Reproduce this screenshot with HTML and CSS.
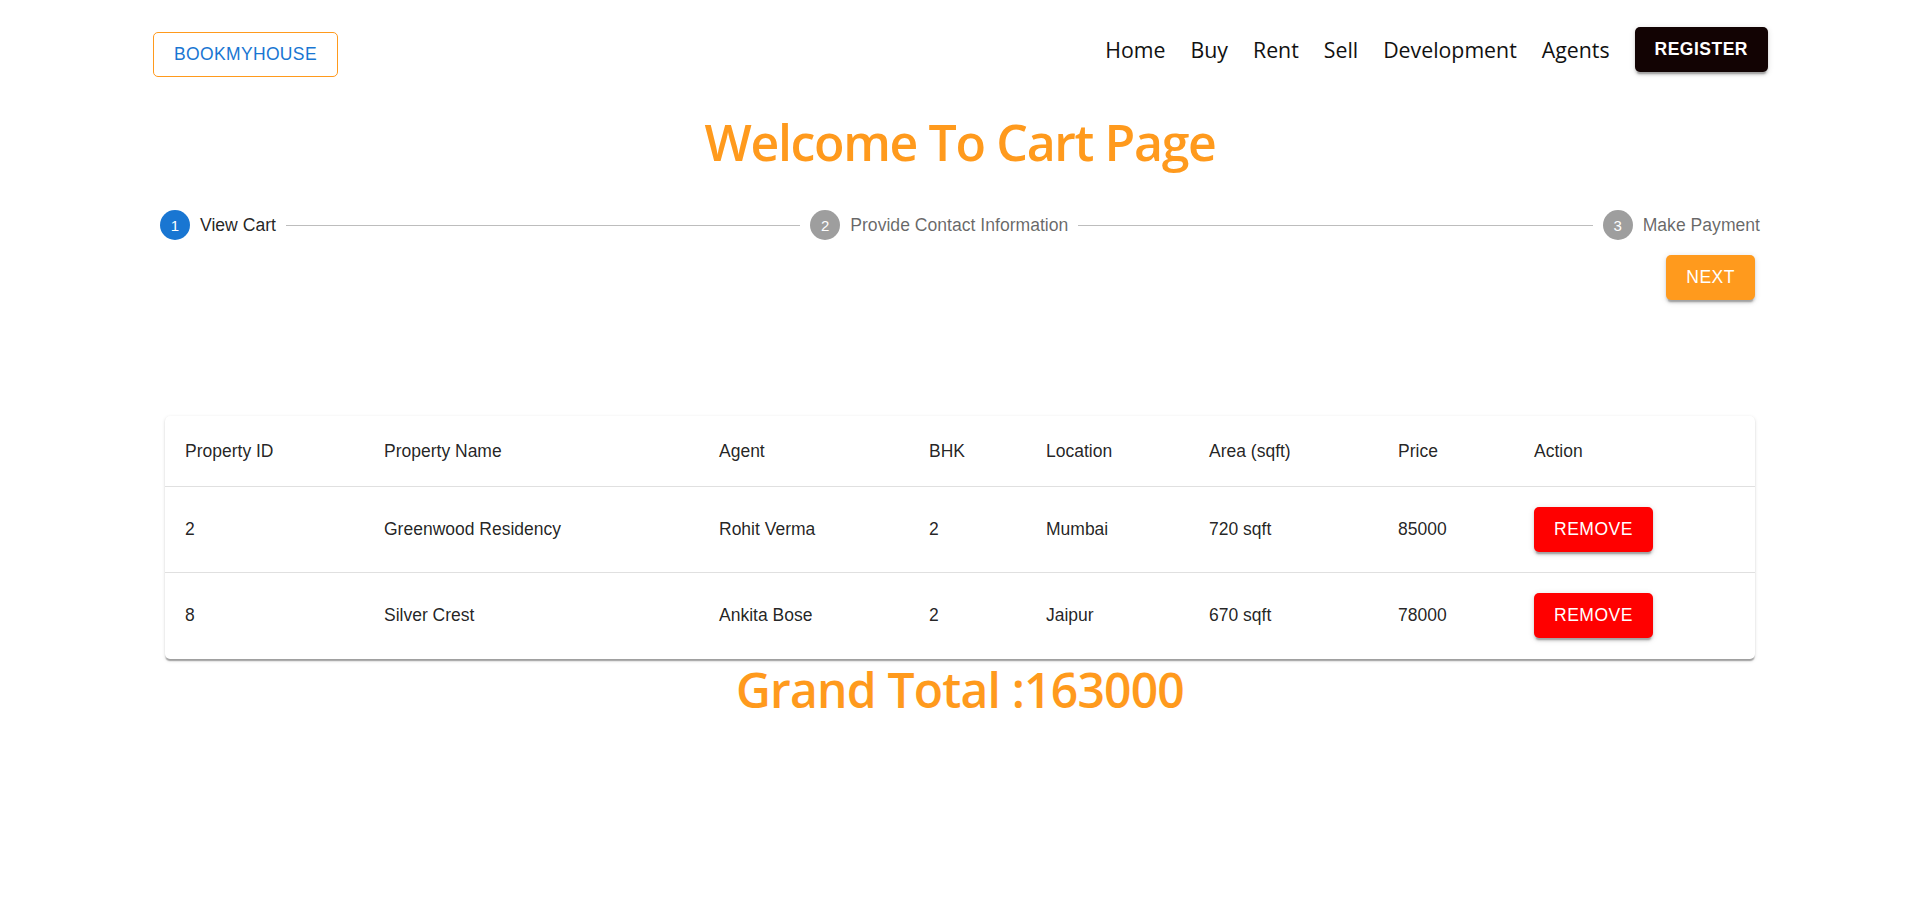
FILE: index.html
```html
<!DOCTYPE html>
<html lang="en">
<head>
<meta charset="utf-8">
<title>Cart - BookMyHouse</title>
<link rel="stylesheet" href="styles.css">
</head>
<body>
<header class="topbar">
  <a class="logo-btn" href="#">BOOKMYHOUSE</a>
  <nav class="nav">
    <a class="nav-link" href="#">Home</a>
    <a class="nav-link" href="#">Buy</a>
    <a class="nav-link" href="#">Rent</a>
    <a class="nav-link" href="#">Sell</a>
    <a class="nav-link" href="#">Development</a>
    <a class="nav-link" href="#">Agents</a>
    <button class="register-btn" type="button">REGISTER</button>
  </nav>
</header>

<h1 class="page-title">Welcome To Cart Page</h1>

<div class="stepper">
  <div class="step">
    <span class="step-icon step-icon-active">1</span>
    <span class="step-label step-label-active">View Cart</span>
  </div>
  <div class="connector"></div>
  <div class="step">
    <span class="step-icon">2</span>
    <span class="step-label">Provide Contact Information</span>
  </div>
  <div class="connector"></div>
  <div class="step">
    <span class="step-icon">3</span>
    <span class="step-label">Make Payment</span>
  </div>
</div>

<div class="step-actions">
  <button class="next-btn" type="button">NEXT</button>
</div>

<div class="table-card">
  <table class="cart-table">
    <colgroup>
      <col class="c-id"><col class="c-name"><col class="c-agent"><col class="c-bhk">
      <col class="c-loc"><col class="c-area"><col class="c-price"><col class="c-action">
    </colgroup>
    <thead>
      <tr>
        <th>Property ID</th>
        <th>Property Name</th>
        <th>Agent</th>
        <th>BHK</th>
        <th>Location</th>
        <th>Area (sqft)</th>
        <th>Price</th>
        <th>Action</th>
      </tr>
    </thead>
    <tbody>
      <tr>
        <td>2</td>
        <td>Greenwood Residency</td>
        <td>Rohit Verma</td>
        <td>2</td>
        <td>Mumbai</td>
        <td>720 sqft</td>
        <td>85000</td>
        <td><button class="remove-btn" type="button">REMOVE</button></td>
      </tr>
      <tr>
        <td>8</td>
        <td>Silver Crest</td>
        <td>Ankita Bose</td>
        <td>2</td>
        <td>Jaipur</td>
        <td>670 sqft</td>
        <td>78000</td>
        <td><button class="remove-btn" type="button">REMOVE</button></td>
      </tr>
    </tbody>
  </table>
</div>

<h1 class="grand-total">Grand Total :163000</h1>
</body>
</html>
```

FILE: styles.css
```css
* { box-sizing: border-box; }

body {
  margin: 0;
  background: #ffffff;
  font-family: "Liberation Sans", Arial, sans-serif;
  color: rgba(0, 0, 0, 0.87);
}

/* ---------- header ---------- */
.topbar {
  display: flex;
  justify-content: space-between;
  align-items: flex-start;
  padding: 27px 152px 0 153px;
}

.logo-btn {
  margin-top: 5px;
  height: 45px;
  display: inline-flex;
  align-items: center;
  padding: 0 20px;
  border: 1px solid #ff9a1d;
  border-radius: 5px;
  color: #1976d2;
  font-size: 17.5px;
  letter-spacing: 0.35px;
  text-decoration: none;
  text-transform: uppercase;
}

.nav {
  display: flex;
  align-items: center;
  gap: 25px;
  height: 45px;
}

.nav-link {
  font-family: "Open Sans", "Noto Sans", sans-serif;
  font-size: 21.3px;
  color: #111111;
  text-decoration: none;
}

.register-btn {
  height: 45px;
  padding: 0 20px;
  border: none;
  border-radius: 5px;
  background: #120303;
  color: #ffffff;
  font-family: "Liberation Sans", Arial, sans-serif;
  font-size: 17.5px;
  font-weight: 700;
  letter-spacing: 0.5px;
  box-shadow: 0 3.75px 1.25px -2.5px rgba(0,0,0,0.2), 0 2.5px 2.5px 0 rgba(0,0,0,0.14), 0 1.25px 6.25px 0 rgba(0,0,0,0.12);
}

/* ---------- titles ---------- */
.page-title,
.grand-total {
  margin: 0;
  text-align: center;
  font-family: "Open Sans", "Noto Sans", sans-serif;
  font-weight: 600;
  color: #ff9a1d;
}

.page-title {
  margin-top: 35px;
  font-size: 50px;
  line-height: 60px;
  letter-spacing: -1.35px;
}

.grand-total {
  font-size: 48px;
  line-height: 62px;
  letter-spacing: -0.8px;
}

/* ---------- stepper ---------- */
.stepper {
  display: flex;
  align-items: center;
  margin: 38px 150px 0 150px;
}

.step {
  display: flex;
  align-items: center;
  padding: 0 10px;
}

.step-icon {
  width: 30px;
  height: 30px;
  border-radius: 50%;
  background: #9e9e9e;
  color: #ffffff;
  font-size: 15px;
  display: flex;
  align-items: center;
  justify-content: center;
  flex-shrink: 0;
}

.step-icon-active { background: #1976d2; }

.step-label {
  padding-left: 10px;
  font-size: 17.6px;
  line-height: 25px;
  color: rgba(0, 0, 0, 0.6);
  white-space: nowrap;
}

.step-label-active { color: rgba(0, 0, 0, 0.87); }

.connector {
  flex: 1 1 auto;
  border-top: 1px solid #bdbdbd;
}

.step-actions {
  display: flex;
  justify-content: flex-end;
  padding-right: 165px;
  margin-top: 15px;
}

.next-btn {
  height: 45px;
  padding: 0 20px;
  border: none;
  border-radius: 5px;
  background: #ff9a1d;
  color: #ffffff;
  font-family: "Liberation Sans", Arial, sans-serif;
  font-size: 17.5px;
  letter-spacing: 0.5px;
  box-shadow: 0 3.75px 1.25px -2.5px rgba(0,0,0,0.2), 0 2.5px 2.5px 0 rgba(0,0,0,0.14), 0 1.25px 6.25px 0 rgba(0,0,0,0.12);
}

/* ---------- table ---------- */
.table-card {
  margin: 116px 165px 0 165px;
  background: #ffffff;
  border-radius: 5px;
  overflow: hidden;
  box-shadow: 0 2.5px 1.25px -1.25px rgba(0,0,0,0.2), 0 1.25px 1.25px 0 rgba(0,0,0,0.14), 0 1.25px 3.75px 0 rgba(0,0,0,0.12);
}

.cart-table {
  width: 100%;
  border-collapse: collapse;
  table-layout: fixed;
}

.c-id { width: 199px; }
.c-name { width: 335px; }
.c-agent { width: 210px; }
.c-bhk { width: 117px; }
.c-loc { width: 163px; }
.c-area { width: 189px; }
.c-price { width: 136px; }
.c-action { width: 241px; }

.cart-table th,
.cart-table td {
  padding: 20px;
  text-align: left;
  font-size: 17.5px;
  color: rgba(0, 0, 0, 0.87);
  border-bottom: 1px solid #e0e0e0;
  vertical-align: middle;
}

.cart-table th {
  font-weight: 400;
  line-height: 30px;
}

.cart-table td {
  line-height: 25px;
  height: 86px;
}

.cart-table tbody tr:last-child td { border-bottom: none; }

.remove-btn {
  height: 45px;
  padding: 0 20px;
  border: none;
  border-radius: 5px;
  background: #ff0000;
  color: #ffffff;
  font-family: "Liberation Sans", Arial, sans-serif;
  font-size: 17.5px;
  letter-spacing: 0.5px;
  display: block;
  box-shadow: 0 3.75px 1.25px -2.5px rgba(0,0,0,0.2), 0 2.5px 2.5px 0 rgba(0,0,0,0.14), 0 1.25px 6.25px 0 rgba(0,0,0,0.12);
}
```
